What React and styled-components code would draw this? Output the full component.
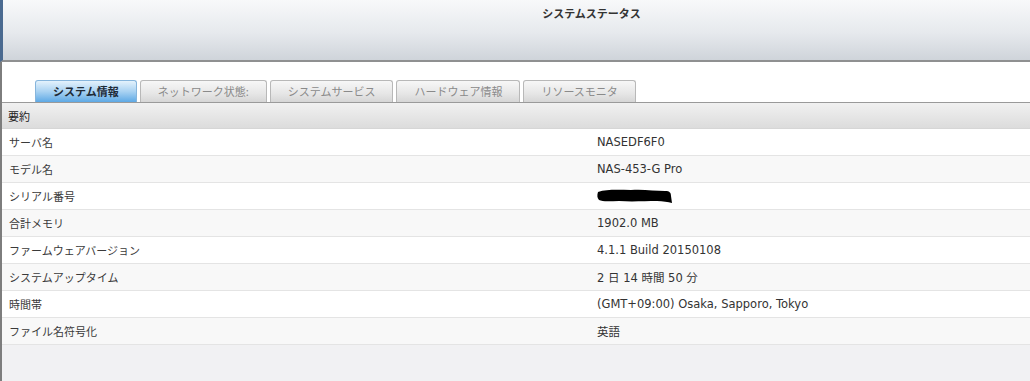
import styled, { createGlobalStyle } from 'styled-components'

const GlobalStyle = createGlobalStyle`
    html, body {
        margin: 0;
        padding: 0;
        background: #f1f1f3;
    }
    body {
        font-family: "Noto Sans CJK JP", sans-serif;
    }
`

const tabs = [
    { label: 'システム情報', active: true },
    { label: 'ネットワーク状態:' },
    { label: 'システムサービス' },
    { label: 'ハードウェア情報' },
    { label: 'リソースモニタ' },
]

const rows = [
    ['サーバ名', 'NASEDF6F0'],
    ['モデル名', 'NAS-453-G Pro'],
    ['シリアル番号', null],
    ['合計メモリ', '1902.0 MB'],
    ['ファームウェアバージョン', '4.1.1 Build 20150108'],
    ['システムアップタイム', '2 日 14 時間 50 分'],
    ['時間帯', '(GMT+09:00) Osaka, Sapporo, Tokyo'],
    ['ファイル名符号化', '英語'],
]

// marker scribble over the serial number
function Redacted() {
    return (
        <svg width="76" height="18" viewBox="0 0 76 18">
            <path
                d="M1 5 C 10 2, 22 3, 34 3 C 46 2, 58 4, 68 4 C 73 4, 74 6, 74 9 L 75 16 C 71 15, 66 14, 60 14 C 48 14, 35 15, 22 14 C 14 14, 6 15, 2 13 C 0 11, 0 8, 1 5 Z"
                fill="#000"
            />
        </svg>
    )
}

function App() {
    return (
        <Window>
            <GlobalStyle />
            <Header>
                <Title>システムステータス</Title>
            </Header>
            <Content>
                <TabBar>
                    {tabs.map(t => (
                        <Tab key={t.label} active={t.active}>{t.label}</Tab>
                    ))}
                </TabBar>
                <SectionHeader>要約</SectionHeader>
                {rows.map(([label, value], i) => (
                    <Row key={label} even={i % 2 === 1}>
                        <Label>{label}</Label>
                        <Value>{value === null ? <Redacted /> : value}</Value>
                    </Row>
                ))}
            </Content>
        </Window>
    )
}

export default App

const Window = styled.div`
    width: 1030px;
    height: 381px;
    overflow: hidden;
    display: flex;
    flex-direction: column;
    background: #f1f1f3;
`

const Header = styled.div`
    height: 62px;
    flex-shrink: 0;
    background: linear-gradient(#f8f9fa, #e6e9ed 55%, #cfd4da);
    border-bottom: 2px solid #8f9091;
    border-left: 3px solid #4a6a90;
    display: flex;
    justify-content: center;
    padding-left: 150px;
    box-sizing: border-box;
`

const Title = styled.div`
    margin-top: 5px;
    font-size: 11px;
    font-weight: bold;
    color: #333;
    line-height: 16px;
`

const Content = styled.div`
    flex: 1;
    border-left: 2px solid #7d7d7d;
    background: #f1f1f3;
`

const TabBar = styled.div`
    display: flex;
    align-items: flex-end;
    gap: 3px;
    height: 41px;
    padding-left: 33px;
    background: #fff;
    border-bottom: 1px solid #9a9a9a;
    box-sizing: border-box;
`

const Tab = styled.div`
    height: 22px;
    line-height: 21px;
    padding: 0 17px;
    font-size: 11px;
    box-sizing: border-box;
    border: 1px solid ${p => (p.active ? '#86b5dc' : '#b8b8b8')};
    border-bottom: none;
    border-radius: 3px 3px 0 0;
    background: ${p => (p.active
        ? 'linear-gradient(#e4f2fc, #a9d2f2 50%, #5ea9e5)'
        : 'linear-gradient(#f7f7f7, #e6e6e6 60%, #d6d6d6)')};
    color: ${p => (p.active ? '#1e2b38' : '#8a8a8a')};
    font-weight: ${p => (p.active ? 'bold' : 'normal')};
    white-space: nowrap;
`

const SectionHeader = styled.div`
    height: 26px;
    line-height: 26px;
    padding-left: 6px;
    font-size: 11px;
    color: #222;
    background: linear-gradient(#f1f1f1, #dcdcdc);
    border-bottom: 1px solid #d6d6d6;
    box-sizing: border-box;
`

const Row = styled.div`
    display: flex;
    align-items: center;
    height: 27px;
    box-sizing: border-box;
    border-bottom: 1px solid #e4e4e4;
    background: ${p => (p.even ? '#f8f8f8' : '#fff')};
`

const Label = styled.div`
    width: 595px;
    padding-left: 7px;
    box-sizing: border-box;
    font-size: 11px;
    color: #3a3a3a;
`

const Value = styled.div`
    display: flex;
    align-items: center;
    font-family: "DejaVu Sans", "Noto Sans CJK JP", sans-serif;
    font-size: 11.5px;
    color: #333;
`
